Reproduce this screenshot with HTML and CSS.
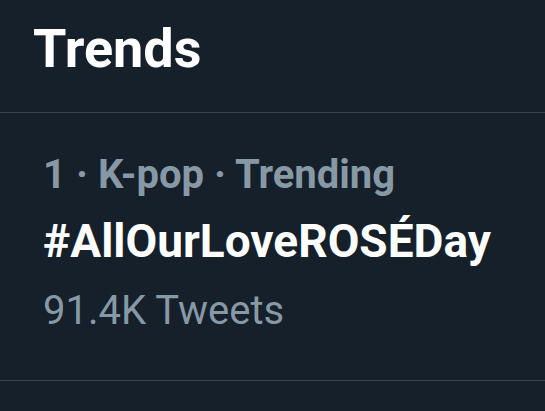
FILE: index.html
```html
<!DOCTYPE html>
<html lang="en">
<head>
  <meta charset="UTF-8" />
  <meta name="viewport" content="width=device-width, initial-scale=1.0" />
  <title>Trends</title>
  <link rel="stylesheet" href="styles.css">
</head>
<body>
  <div class="header">Trends</div>

  <div class="trend">
    <div class="meta">1 · K-pop · Trending</div>
    <div class="tag">#AllOurLoveROSÉDay</div>
    <div class="count">91.4K Tweets</div>
  </div>
</body>
</html>
```

FILE: styles.css
```css
body {
  margin: 0;
  font-family: Roboto, 'Liberation Sans', sans-serif;
  background-color: #15202b;
  height: 100vh;
  overflow: hidden;
}
.header {
  color: #ffffff;
  font-size: 54px;
  font-weight: 700;
  line-height: 63px;
  padding: 17px 33px 32px;
  border-bottom: 1px solid #38444d;
}
.trend {
  padding: 27px 43px 32px;
  border-bottom: 1px solid #38444d;
}
.trend div {
  white-space: nowrap;
}
.trend .meta {
  color: #8899a6;
  font-size: 40px;
  font-weight: 700;
  line-height: 69px;
}
.trend .tag {
  color: #ffffff;
  font-size: 46px;
  font-weight: 700;
  line-height: 65px;
}
.trend .count {
  color: #8899a6;
  font-size: 40px;
  font-weight: 400;
  line-height: 74px;
}
```
